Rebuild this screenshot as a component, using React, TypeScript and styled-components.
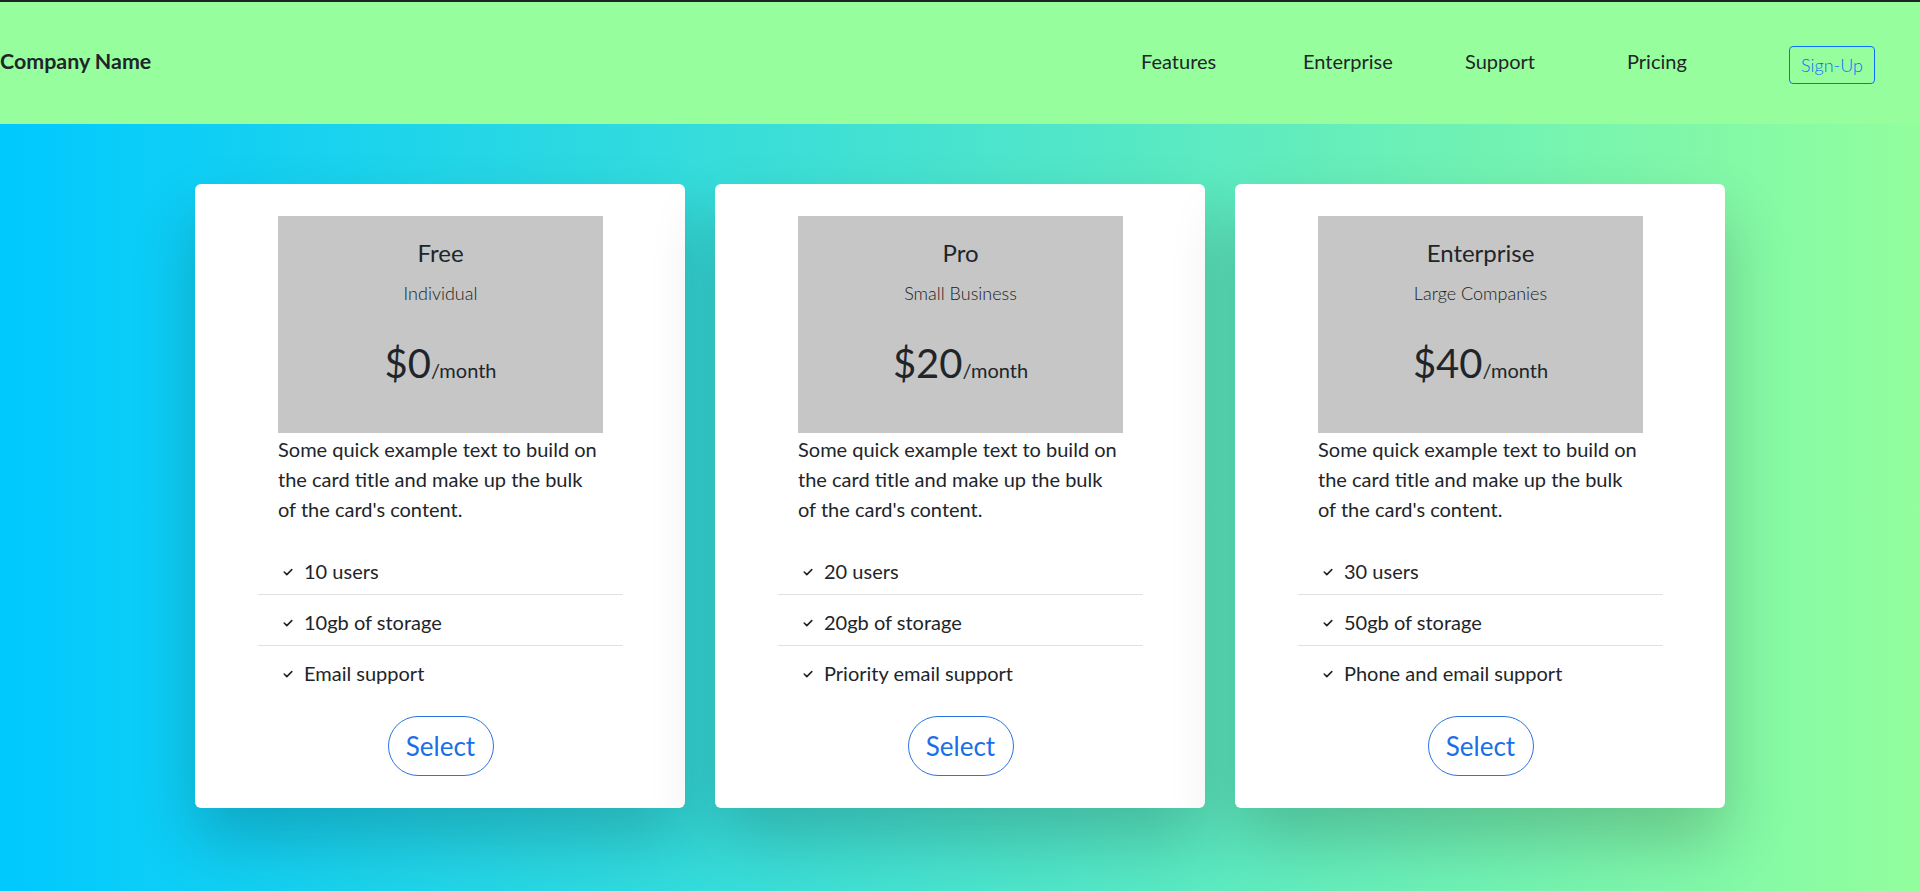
import React from "react";
import styled, { createGlobalStyle } from "styled-components";

const GlobalStyle = createGlobalStyle`
  html, body { margin: 0; padding: 0; }
  body {
    font-family: Lato, "Open Sans", "Liberation Sans", sans-serif;
    color: #212529;
    background: linear-gradient(to right, #00c9ff, #92fe9d);
    min-height: 891px;
  }
  * { box-sizing: border-box; }
`;

const Page = styled.div`
  min-height: 891px;
  background: linear-gradient(to right, #00c9ff, #92fe9d);
`;

const Header = styled.header`
  height: 124px;
  border-top: 2px solid #1e2622;
  background: #97fe9d;
  display: flex;
  align-items: center;
  padding: 0 45px 5px 0;
`;

const Brand = styled.div`
  font-size: 21.4px;
  font-weight: 700;
  color: #212529;
  margin-right: auto;
`;

const Nav = styled.nav`
  display: flex;
  align-items: center;
`;

const NavLink = styled.a`
  width: 162px;
  font-size: 20px;
  color: #212529;
  text-decoration: none;
`;

const SignUp = styled.a`
  display: inline-flex;
  align-items: center;
  justify-content: center;
  width: 86px;
  height: 38px;
  margin-top: 9px;
  border: 1px solid #0d6efd;
  border-radius: 4px;
  color: #0d6efd;
  font-size: 18px;
  font-weight: 300;
  text-decoration: none;
`;

const Main = styled.main`
  display: flex;
  justify-content: center;
  gap: 30px;
  padding-top: 60px;
`;

const Card = styled.div`
  width: 490px;
  height: 624px;
  background: #fff;
  border-radius: 6px;
  padding: 32px 82px 32px 83px;
  box-shadow: 0 32px 64px rgba(0, 0, 0, 0.2);
  display: flex;
  flex-direction: column;
`;

const PlanBox = styled.div`
  height: 218px;
  background: #c6c6c6;
  display: flex;
  flex-direction: column;
  align-items: center;
  padding-top: 22px;
`;

const PlanTitle = styled.div`
  font-size: 24px;
  line-height: 29px;
  color: #212529;
`;

const PlanSubtitle = styled.div`
  margin-top: 15px;
  font-size: 18px;
  line-height: 22px;
  font-weight: 300;
  color: #1a1d20;
`;

const Price = styled.div`
  margin-top: 35px;
  font-size: 40px;
  line-height: 48px;
  color: #212529;
  display: flex;
  align-items: baseline;
`;

const PerMonth = styled.span`
  font-size: 20px;
`;

const Description = styled.p`
  margin: 1px 0 0;
  font-size: 20px;
  line-height: 30px;
  color: #212529;
`;

const Features = styled.ul`
  list-style: none;
  margin: 20px -20px 0;
  padding: 0;
`;

const Feature = styled.li`
  display: flex;
  align-items: center;
  gap: 11px;
  padding: 12px 0 8px 25px;
  font-size: 20px;
  line-height: 30px;
  color: #212529;
  border-bottom: 1px solid #dee2e6;
  &:last-child {
    border-bottom: none;
  }
`;

const Check = styled.svg`
  width: 10px;
  height: 10px;
  flex: none;
  margin-top: 2px;
`;

const SelectButton = styled.button`
  align-self: center;
  margin-top: 20px;
  width: 106px;
  height: 60px;
  border: 1px solid #2b74e0;
  border-radius: 30px;
  background: transparent;
  color: #1a6ee8;
  font-family: inherit;
  font-size: 26px;
  cursor: pointer;
`;

type Plan = {
  title: string;
  subtitle: string;
  price: string;
  features: string[];
};

const plans: Plan[] = [
  { title: "Free", subtitle: "Individual", price: "$0", features: ["10 users", "10gb of storage", "Email support"] },
  { title: "Pro", subtitle: "Small Business", price: "$20", features: ["20 users", "20gb of storage", "Priority email support"] },
  { title: "Enterprise", subtitle: "Large Companies", price: "$40", features: ["30 users", "50gb of storage", "Phone and email support"] },
];

const CheckIcon = () => (
  <Check viewBox="0 0 10 10" fill="none">
    <polyline points="1.2,5 3.8,7.6 8.8,2.6" stroke="#212529" strokeWidth="1.6" strokeLinecap="round" strokeLinejoin="round" />
  </Check>
);

export default function App() {
  return (
    <>
      <GlobalStyle />
      <Page>
        <Header>
          <Brand>Company Name</Brand>
          <Nav>
            <NavLink href="#">Features</NavLink>
            <NavLink href="#">Enterprise</NavLink>
            <NavLink href="#">Support</NavLink>
            <NavLink href="#">Pricing</NavLink>
            <SignUp href="#">Sign-Up</SignUp>
          </Nav>
        </Header>
        <Main>
          {plans.map((p) => (
            <Card key={p.title}>
              <PlanBox>
                <PlanTitle>{p.title}</PlanTitle>
                <PlanSubtitle>{p.subtitle}</PlanSubtitle>
                <Price>
                  {p.price}
                  <PerMonth>/month</PerMonth>
                </Price>
              </PlanBox>
              <Description>
                Some quick example text to build on the card title and make up the bulk of the card's content.
              </Description>
              <Features>
                {p.features.map((f) => (
                  <Feature key={f}>
                    <CheckIcon />
                    {f}
                  </Feature>
                ))}
              </Features>
              <SelectButton>Select</SelectButton>
            </Card>
          ))}
        </Main>
      </Page>
    </>
  );
}
